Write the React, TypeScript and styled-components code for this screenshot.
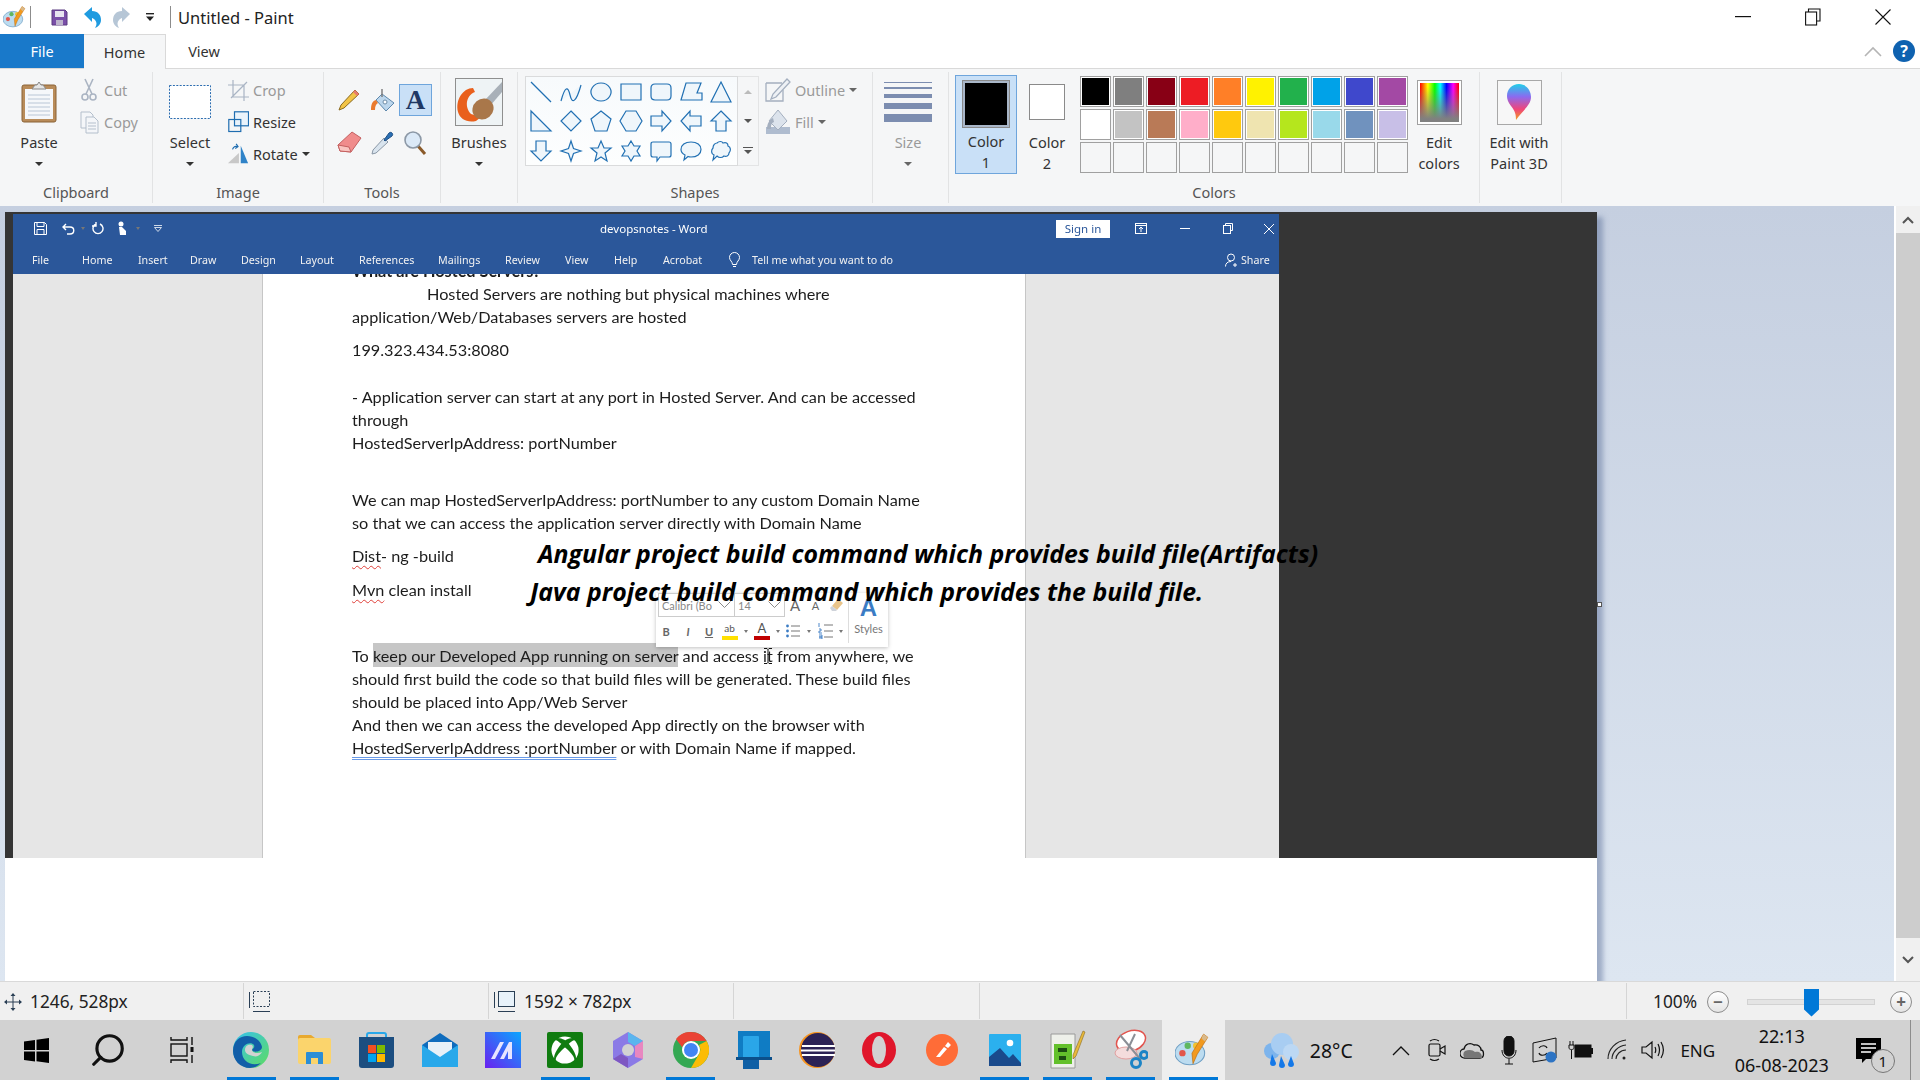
import React from "react"
import styled, { createGlobalStyle } from "styled-components"
import { FaXbox } from "react-icons/fa"
import { FiSearch } from "react-icons/fi"

const GlobalStyle = createGlobalStyle`
  html, body { margin: 0; padding: 0; width: 1920px; height: 1080px; overflow: hidden; background: #fff; }
  body { font-family: "Noto Sans", "Open Sans", sans-serif; color: #222; }
  * { box-sizing: border-box; }
  svg { display: block; }
`

const Root = styled.div`
  width: 1920px;
  height: 1080px;
  display: flex;
  flex-direction: column;
  overflow: hidden;
`

/* ---------- title bar ---------- */
const TitleBar = styled.div`
  height: 34px;
  padding-right: 2px;
  display: flex;
  align-items: center;
  background: #fff;
`
const QuickSlot = styled.div<{ $w: number }>`
  width: ${p => p.$w}px;
  flex: none;
  height: 28px;
  display: flex;
  align-items: center;
  justify-content: center;
`
const VSep = styled.div`
  width: 1px;
  height: 22px;
  background: #8c8c8c;
`
const WindowTitle = styled.div`
  margin-left: 7px;
  font-size: 16.5px;
  color: #222;
  flex: 1;
`
const WinButton = styled.div`
  width: 70px;
  height: 34px;
  display: flex;
  align-items: center;
  justify-content: center;
`

/* ---------- tabs ---------- */
const TabRow = styled.div`
  height: 35px;
  display: flex;
  align-items: stretch;
  background: #fff;
  border-bottom: 1px solid #d9d9d9;
`
const Tab = styled.div<{ $kind?: "file" | "active" }>`
  width: ${p => (p.$kind === "file" ? 84 : p.$kind === "active" ? 82 : 76)}px;
  display: flex;
  align-items: center;
  justify-content: center;
  font-size: 14.5px;
  color: ${p => (p.$kind === "file" ? "#fff" : "#333")};
  background: ${p => (p.$kind === "file" ? "#1979ca" : p.$kind === "active" ? "#f5f6f7" : "#fff")};
  border-right: ${p => (p.$kind === "active" ? "1px solid #d9d9d9" : "none")};
  border-top: ${p => (p.$kind === "active" ? "1px solid #d9d9d9" : "none")};
  margin-bottom: ${p => (p.$kind === "active" ? "-1px" : "0")};
`
const TabFill = styled.div`
  flex: 1;
`
const RibbonHelp = styled.div`
  width: 56px;
  display: flex;
  align-items: center;
  gap: 11px;
`

/* ---------- ribbon ---------- */
const Ribbon = styled.div`
  height: 137px;
  background: #f5f6f7;
  display: flex;
  padding: 3px 0 3px;
`
const Group = styled.section<{ $w: number }>`
  width: ${p => p.$w}px;
  display: flex;
  flex-direction: column;
  border-right: 1px solid #e2e3e4;
`
const GroupBody = styled.div`
  flex: 1;
  display: flex;
  min-height: 0;
`
const GroupLabel = styled.div`
  height: 21px;
  text-align: center;
  font-size: 14.5px;
  line-height: 21px;
  color: #555;
`
const BigBtn = styled.div<{ $w: number; $on?: boolean; $muted?: boolean }>`
  width: ${p => p.$w}px;
  flex: none;
  display: flex;
  flex-direction: column;
  align-items: center;
  font-size: 14.5px;
  color: ${p => (p.$muted ? "#9a9a9a" : "#333")};
  align-self: flex-start;
  ${p => (p.$on ? "background:#c9e0f7;border:1px solid #6ea5dc;margin-top:3px;height:99px;" : "")}
`
const BigIcon = styled.div<{ $on?: boolean }>`
  height: ${p => (p.$on ? 56 : 60)}px;
  display: flex;
  align-items: center;
  justify-content: center;
`
const BigLine = styled.div`
  height: 21px;
  line-height: 21px;
  white-space: nowrap;
  display: flex;
  align-items: center;
  justify-content: center;
`
const Caret = styled.span<{ $c?: string }>`
  display: inline-block;
  width: 0;
  height: 0;
  border-left: 4px solid transparent;
  border-right: 4px solid transparent;
  border-top: 4px solid ${p => p.$c || "#333"};
`
const SmallStack = styled.div<{ $ml?: number }>`
  padding-top: 2px;
  margin-left: ${p => p.$ml || 0}px;
  display: flex;
  flex-direction: column;
`
const SmallRow = styled.div<{ $muted?: boolean }>`
  height: 32px;
  display: flex;
  align-items: center;
  gap: 4px;
  font-size: 14.5px;
  white-space: nowrap;
  color: ${p => (p.$muted ? "#9a9a9a" : "#333")};
`
const SmallIcon = styled.div`
  width: 22px;
  display: flex;
  justify-content: center;
`
const ToolGrid = styled.div`
  margin: 6px 0 0 9px;
  display: grid;
  grid-template-columns: repeat(3, 33px);
  grid-auto-rows: 43px;
`
const ToolCell = styled.div<{ $on?: boolean }>`
  display: flex;
  align-items: center;
  justify-content: center;
  ${p => (p.$on ? "background:#c9e0f7;border:1px solid #6ea5dc;margin:6px 0 5px;" : "")}
`
const TextToolGlyph = styled.span`
  font-family: "Liberation Serif", serif;
  font-size: 27px;
  font-weight: 700;
  line-height: 30px;
  color: #1f3864;
`
const Gallery = styled.div`
  margin: 4px 0 0 7px;
  width: 213px;
  height: 90px;
  background: linear-gradient(#f7fafc, #fdfefe);
  border: 1px solid #dadbdc;
  display: grid;
  grid-template-columns: repeat(7, 30px);
  grid-auto-rows: 29.5px;
`
const GalleryCell = styled.div`
  display: flex;
  align-items: center;
  justify-content: center;
`
const GalleryScroll = styled.div`
  margin-top: 4px;
  width: 21px;
  height: 90px;
  border: 1px solid #e3e4e5;
  border-left: none;
  display: flex;
  flex-direction: column;
`
const ScrollStep = styled.div`
  flex: 1;
  display: flex;
  flex-direction: column;
  gap: 2px;
  align-items: center;
  justify-content: center;
`
const CaretUp = styled(Caret)`
  transform: rotate(180deg);
`
const Bar = styled.div`
  width: 10px;
  height: 1px;
  background: #555;
`
const Palette = styled.div`
  margin: 4px 0 0 3px;
  display: grid;
  grid-template-columns: repeat(10, 31px);
  grid-auto-rows: 31px;
  gap: 2px;
  flex: none;
  align-self: flex-start;
`
const Swatch = styled.div<{ $c?: string }>`
  border: 1px solid #a0a0a0;
  padding: 1px;
  background: ${p => (p.$c ? "#fff" : "#f5f6f7")};
  &::after {
    content: "";
    display: block;
    width: 100%;
    height: 100%;
    background: ${p => p.$c || "transparent"};
  }
`
const ColorWell = styled.div<{ $size: number; $c: string }>`
  width: ${p => p.$size}px;
  height: ${p => p.$size}px;
  background: ${p => p.$c};
  border: 1px solid #8a8a8a;
  box-shadow: inset 0 0 0 1px #fff;
  ${p => (p.$c === "#000" ? "outline:2px solid #a9b6c8;outline-offset:-3px;" : "")}
`
const GradientWell = styled.div`
  width: 43px;
  height: 43px;
  border: 2px solid #fff;
  outline: 1px solid #a0a0a0;
  background: linear-gradient(rgba(128, 128, 128, 0) 10%, #808080 92%),
    linear-gradient(90deg, #f00, #ff0 20%, #0f0 38%, #0ff 52%, #00f 68%, #f0f 85%, #f00);
`
const Paint3dTile = styled.div`
  width: 45px;
  height: 45px;
  background: #f7f7f7;
  border: 1px solid #a8a8a8;
  display: flex;
  align-items: center;
  justify-content: center;
`

/* ---------- canvas ---------- */
const Workspace = styled.div`
  height: 775px;
  display: flex;
  overflow: hidden;
`
const CanvasArea = styled.div`
  flex: 1;
  padding: 6px 0 0 5px;
  background: linear-gradient(#c5cfe0, #dde6f1);
  overflow: hidden;
`
const Bitmap = styled.div`
  width: 1592px;
  height: 769px;
  background: #fff;
  box-shadow: 6px 5px 5px rgba(96, 116, 156, 0.5);
  position: relative;
`
const Handle = styled.div`
  position: absolute;
  left: 1592px;
  top: 390px;
  width: 5px;
  height: 5px;
  background: #fff;
  border: 1px solid #555;
`
const Shot = styled.div`
  height: 646px;
  background: #353535;
  display: flex;
  position: relative;
  overflow: hidden;
`
const EdgeBar = styled.div`
  width: 8px;
  background: #353535;
`
const WordWindow = styled.div`
  width: 1266px;
  margin-top: 2px;
  display: flex;
  flex-direction: column;
  filter: blur(0.3px);
`
const WordTitle = styled.div`
  height: 29px;
  padding-left: 11px;
  background: #2b579a;
  color: #fff;
  display: flex;
  align-items: center;
  font-size: 11.5px;
`
const WordSlot = styled.div<{ $w: number }>`
  width: ${p => p.$w}px;
  flex: none;
  display: flex;
  align-items: center;
  justify-content: center;
`
const WordName = styled.div`
  width: 883px;
  flex: none;
  padding-left: 427px;
`
const SignIn = styled.div`
  width: 54px;
  height: 18px;
  flex: none;
  background: #fff;
  color: #2b579a;
  font-size: 11.5px;
  line-height: 18px;
  text-align: center;
  white-space: nowrap;
`
const WordTabs = styled.div`
  height: 31px;
  padding: 2px 0 0 19px;
  background: #2b579a;
  color: #f2f2f2;
  display: flex;
  align-items: center;
  font-size: 10.7px;
`
const WordTab = styled.div<{ $w: number }>`
  width: ${p => p.$w}px;
  flex: none;
  white-space: nowrap;
`
const TellMe = styled.div`
  width: 496px;
  flex: none;
  display: flex;
  align-items: center;
  gap: 12px;
`
const ShareBox = styled.div`
  display: flex;
  align-items: center;
  gap: 2px;
`
const DocBody = styled.div`
  flex: 1;
  display: flex;
  min-height: 0;
  background: #e6e6e6;
`
const Page = styled.div`
  margin-left: 249px;
  width: 764px;
  background: #fff;
  border-left: 1px solid #c6c6c6;
  border-right: 1px solid #c6c6c6;
  padding-left: 89px;
  overflow: hidden;
  font-family: Lato, "Open Sans", sans-serif;
  font-size: 16.25px;
  color: #1c1c1c;
`
const DocLine = styled.div<{ $gap?: number; $indent?: number; $bold?: boolean }>`
  height: 23px;
  line-height: 23px;
  white-space: nowrap;
  margin-top: ${p => p.$gap || 0}px;
  padding-left: ${p => p.$indent || 0}px;
  font-weight: ${p => (p.$bold ? 700 : 400)};
`
const Squiggle = styled.span`
  text-decoration: underline wavy #e0403a 1px;
  text-underline-offset: 3px;
`
const Selected = styled.span`
  background: #c6c6c6;
  padding: 3px 0 2px;
`
const GrammarMark = styled.span`
  text-decoration: underline double #6a9be8 1px;
  text-underline-offset: 3px;
`
const Annotation = styled.div<{ $left: number; $top: number }>`
  position: absolute;
  left: ${p => p.$left}px;
  top: ${p => p.$top}px;
  z-index: 3;
  font-family: "Open Sans", sans-serif;
  font-style: italic;
  font-weight: 700;
  font-size: 24.85px;
  line-height: 32px;
  color: #000;
  white-space: nowrap;
`
const MiniBar = styled.div`
  position: absolute;
  left: 651px;
  top: 381px;
  width: 232px;
  height: 54px;
  background: #fff;
  box-shadow: 0 1px 4px rgba(0, 0, 0, 0.25);
  z-index: 2;
  display: flex;
  flex-direction: column;
  gap: 2px;
  padding-left: 2px;
  font-family: Lato, sans-serif;
  color: #666;
  font-size: 11px;
`
const MiniRow = styled.div`
  height: 24px;
  display: flex;
  align-items: center;
`
const MiniField = styled.div<{ $w: number }>`
  width: ${p => p.$w}px;
  height: 24px;
  flex: none;
  border: 1px solid #ccc;
  border-left-width: ${p => (p.$w > 60 ? 1 : 0)}px;
  display: flex;
  align-items: center;
  justify-content: space-between;
  padding: 0 3px;
  font-size: 11px;
  color: #888;
  white-space: nowrap;
`
const MiniCell = styled.div<{ $w: number; $b?: boolean; $i?: boolean; $u?: boolean; $size?: number }>`
  width: ${p => p.$w}px;
  flex: none;
  display: flex;
  align-items: center;
  justify-content: center;
  font-size: ${p => p.$size || 11}px;
  font-weight: ${p => (p.$b ? 700 : 400)};
  font-style: ${p => (p.$i ? "italic" : "normal")};
  text-decoration: ${p => (p.$u ? "underline" : "none")};
`
const MarkedLetter = styled.span<{ $bar: string; $size: number }>`
  width: 16px;
  height: 18px;
  text-align: center;
  font-size: ${p => p.$size}px;
  line-height: 13px;
  color: #555;
  border-bottom: 4px solid ${p => p.$bar};
`
const TinyCaret = styled(Caret)`
  border-left-width: 2.5px;
  border-right-width: 2.5px;
  border-top-width: 3px;
  border-top-color: #777;
`
const StylesBox = styled.div`
  position: absolute;
  right: 0;
  top: 4px;
  bottom: 4px;
  width: 40px;
  border-left: 1px solid #ddd;
  display: flex;
  flex-direction: column;
  align-items: center;
  gap: 3px;
  font-size: 11px;
  color: #777;
`
const StylesGlyph = styled.div`
  height: 22px;
  font-family: "Liberation Sans", sans-serif;
  font-size: 24px;
  line-height: 22px;
  font-weight: 700;
  color: #3b7cc4;
`
const BeamCursor = styled.div`
  position: absolute;
  left: 759px;
  top: 436px;
  z-index: 4;
`
const Scrollbar = styled.div`
  width: 26px;
  background: #f0f0f0;
  border-left: 2px solid #fff;
  display: flex;
  flex-direction: column;
`
const ScrollEnd = styled.div<{ $h: number }>`
  height: ${p => p.$h}px;
  display: flex;
  align-items: center;
  justify-content: center;
`
const ScrollThumb = styled.div`
  flex: 1;
  background: #cdcdcd;
`

/* ---------- status bar ---------- */
const StatusBar = styled.div`
  height: 39px;
  background: #f0f0f0;
  border-top: 1px solid #d9d9d9;
  display: flex;
  padding-top: 1px;
  font-size: 17.3px;
  color: #222;
`
const StatusCell = styled.div<{ $w?: number }>`
  width: ${p => (p.$w ? `${p.$w}px` : "auto")};
  flex: ${p => (p.$w ? "none" : 1)};
  height: 36px;
  padding-top: 1px;
  border-right: 1px solid #d5d5d5;
  display: flex;
  align-items: center;
  gap: 8px;
  padding-left: 4px;
`
const ZoomBox = styled.div`
  flex: 1;
  display: flex;
  align-items: center;
  padding-left: 26px;
`
const ZoomPct = styled.div`
  width: 54px;
  flex: none;
`
const ZoomButton = styled.div`
  width: 22px;
  height: 22px;
  flex: none;
  border: 1px solid #8c8c8c;
  border-radius: 50%;
  background: linear-gradient(#fff, #e4e4e4);
  display: flex;
  align-items: center;
  justify-content: center;
  font-weight: 700;
  font-size: 17px;
  line-height: 1;
  color: #666;
`
const ZoomTrack = styled.div`
  width: 128px;
  flex: none;
  height: 6px;
  margin: 0 15px 0 18px;
  background: #e4e4e4;
  border: 1px solid #d2d2d2;
  position: relative;
`
const ZoomThumb = styled.div`
  position: absolute;
  left: 56px;
  top: -11px;
  width: 15px;
  height: 28px;
  background: #0078d7;
  clip-path: polygon(0 0, 100% 0, 100% 75%, 50% 100%, 0 75%);
`

/* ---------- taskbar ---------- */
const Taskbar = styled.div`
  height: 60px;
  background: #d2d2d2;
  display: flex;
  align-items: stretch;
  color: #111;
`
const TaskSlot = styled.div<{ $w: number; $active?: boolean }>`
  width: ${p => p.$w}px;
  flex: none;
  display: flex;
  flex-direction: column;
  align-items: center;
  background: ${p => (p.$active ? "#eeeeee" : "transparent")};
`
const TaskGlyph = styled.div`
  flex: 1;
  padding-top: 3px;
  display: flex;
  align-items: center;
  justify-content: center;
`
const TaskLine = styled.div<{ $on?: boolean }>`
  width: 49px;
  height: 3px;
  background: ${p => (p.$on ? "#0078d7" : "transparent")};
`
const TraySlot = styled.div<{ $w: number; $start?: boolean }>`
  width: ${p => p.$w}px;
  flex: none;
  display: flex;
  align-items: center;
  justify-content: ${p => (p.$start ? "flex-start" : "center")};
  padding-left: ${p => (p.$start ? 9 : 0)}px;
  font-size: ${p => (p.$start ? 19.5 : 17)}px;
`
const Clock = styled.div`
  width: 114px;
  flex: none;
  display: flex;
  flex-direction: column;
  align-items: center;
  justify-content: center;
  gap: 5px;
  line-height: 24px;
  font-size: 18px;
`
const ClockLine = styled.div`
  height: 24px;
`
const NotifyBox = styled.div`
  width: 60px;
  flex: none;
  position: relative;
  display: flex;
  align-items: center;
  justify-content: center;
`
const NotifyBadge = styled.div`
  position: absolute;
  left: 32px;
  top: 29px;
  width: 24px;
  height: 24px;
  border-radius: 50%;
  border: 1px solid #777;
  background: #d2d2d2;
  text-align: center;
  font-size: 15px;
  line-height: 22px;
`
const TaskEnd = styled.div`
  width: 12px;
  border-right: 1px solid #8c8c8c;
`
const SearchGlyph = styled.div`
  font-size: 38px;
  color: #111;
  display: flex;
  transform: scaleX(-1);
`
const XboxTile = styled.div`
  width: 36px;
  height: 36px;
  border-radius: 2px;
  background: #107c10;
  color: #fff;
  display: flex;
  align-items: center;
  justify-content: center;
  font-size: 28px;
`

/* ---------- drawn icons ---------- */
const PaintLogo = ({ s = 24 }: { s?: number }) => (
  <svg width={s} height={s} viewBox="0 0 34 34">
    <ellipse cx="14" cy="20" rx="14" ry="11" fill="#bcdcf0" stroke="#6f9fc4" />
    <circle cx="7" cy="20" r="3" fill="#e2574c" />
    <circle cx="12" cy="13" r="3" fill="#5fb760" />
    <circle cx="20" cy="13" r="3" fill="#f2c230" />
    <path d="M27 2l4 3-10 16-4 9-1-10z" fill="#f29a1f" stroke="#b86a10" strokeWidth=".6" />
    <path d="M27 2l4 3-3 4-3-3z" fill="#d9b98a" />
  </svg>
)
const SaveIcon = () => (
  <svg width="17" height="17" viewBox="0 0 17 17">
    <path d="M1 1h13l2 2v13H1z" fill="#7a4fa8" stroke="#5a3a80" />
    <rect x="4" y="2" width="9" height="6" fill="#e8e4f0" />
    <rect x="5" y="11" width="7" height="5" fill="#bdb4cc" />
  </svg>
)
const UndoIcon = ({ c }: { c: string }) => (
  <svg width="22" height="24" viewBox="0 0 22 24">
    <path d="M3 9l8-7v4c6 0 9 4 9 9 0 4-3 7-6 8 2-3 2-6 0-8-1-1-2-2-3-2v4z" fill={c} />
  </svg>
)
const RedoIcon = () => (
  <svg width="22" height="24" viewBox="0 0 22 24" transform="scale(-1 1)">
    <path d="M3 9l8-7v4c6 0 9 4 9 9 0 4-3 7-6 8 2-3 2-6 0-8-1-1-2-2-3-2v4z" fill="#b6c6d6" />
  </svg>
)
const CustomizeIcon = () => (
  <svg width="10" height="10" viewBox="0 0 10 10">
    <rect x="1" y="1" width="8" height="1.4" fill="#222" />
    <path d="M1 4.5h8L5 9z" fill="#222" />
  </svg>
)
const MinimizeIcon = () => (
  <svg width="16" height="2"><rect width="16" height="1.2" fill="#111" /></svg>
)
const RestoreIcon = () => (
  <svg width="16" height="18" viewBox="0 0 16 18" fill="none" stroke="#111" strokeWidth="1.1">
    <rect x=".6" y="4" width="11" height="13" fill="#fff" />
    <path d="M3.5 4V1h11.5v12h-3.4" />
  </svg>
)
const CloseIcon = () => (
  <svg width="16" height="16" viewBox="0 0 16 16" stroke="#111" strokeWidth="1.1">
    <path d="M.5.5l15 15M15.5.5l-15 15" />
  </svg>
)
const ChevronUp = () => (
  <svg width="18" height="11" viewBox="0 0 18 11" fill="none" stroke="#b5b5b5" strokeWidth="1.6">
    <path d="M1 10l8-8 8 8" />
  </svg>
)
const HelpIcon = () => (
  <svg width="22" height="22" viewBox="0 0 22 22">
    <circle cx="11" cy="11" r="11" fill="#0f62b0" />
    <text x="11" y="17" textAnchor="middle" fontSize="16" fontWeight="700" fill="#fff" fontFamily="Noto Sans">?</text>
  </svg>
)
const PasteIcon = () => (
  <svg width="36" height="42" viewBox="0 0 36 42">
    <rect x="1" y="4" width="34" height="37" rx="2" fill="#b98c5a" stroke="#8a6236" />
    <rect x="4" y="8" width="28" height="30" fill="#f5f7fa" />
    <g stroke="#b9c6d6"><path d="M7 14h22M7 18h22M7 22h22M7 26h22M7 30h22M7 34h22" /></g>
    <path d="M11 8l3-4h2l2-3 2 3h2l3 4z" fill="#e6e6e6" stroke="#888" />
  </svg>
)
const CutIcon = () => (
  <svg width="16" height="24" viewBox="0 0 16 24" fill="none" stroke="#aab4c2" strokeWidth="1.6">
    <path d="M4 1l7 15M12 1L5 16" />
    <circle cx="4" cy="19" r="3" />
    <circle cx="12" cy="19" r="3" />
  </svg>
)
const CopyIcon = () => (
  <svg width="19" height="23" viewBox="0 0 19 23" fill="#f4f6f9" stroke="#b4bfcc">
    <path d="M1 1h9l3 3v13H1z" />
    <path d="M6 6h8l4 4v12H6z" />
    <path d="M8 12h8M8 15h8M8 18h8" />
  </svg>
)
const SelectIcon = () => (
  <svg width="42" height="34" viewBox="0 0 42 34">
    <rect x=".5" y=".5" width="41" height="33" fill="#fff" stroke="#2b6cb0" strokeDasharray="2 1.4" />
  </svg>
)
const CropIcon = () => (
  <svg width="21" height="21" viewBox="0 0 21 21" fill="none" stroke="#a9b4c4" strokeWidth="1.2">
    <path d="M5 0v17h16M0 5h16v16M3 18L19 2" />
  </svg>
)
const ResizeIcon = () => (
  <svg width="21" height="22" viewBox="0 0 21 22">
    <rect x="6.5" y=".8" width="14" height="14" fill="#eaf3fb" stroke="#1f6db0" strokeWidth="1.2" />
    <rect x=".8" y="8.5" width="12" height="12" fill="none" stroke="#1f6db0" strokeWidth="1.2" />
  </svg>
)
const RotateIcon = () => (
  <svg width="24" height="22" viewBox="0 0 24 22">
    <path d="M1 21l12-11v11z" fill="#c8c8c8" />
    <path d="M15 2l8 19h-8z" fill="#2f83c8" />
    <path d="M6 6c1-3 3-4 5-3M10 0l2 3-3 2" fill="none" stroke="#1f6db0" strokeWidth="1.3" />
  </svg>
)
const PencilIcon = () => (
  <svg width="23" height="23" viewBox="0 0 23 23">
    <path d="M17 2l4 4L6 20l-5 2 2-5z" fill="#f2c447" stroke="#8a6a20" />
    <path d="M17 2l4 4-2 2-4-4z" fill="#e77a6e" />
  </svg>
)
const BucketIcon = () => (
  <svg width="25" height="24" viewBox="0 0 25 24">
    <path d="M12 6l12 9-8 8-10-11z" fill="#bcd6ec" stroke="#5d88ad" />
    <path d="M6 12C2 13 1 17 1 22h4c0-4 1-6 3-7z" fill="#ea7a2e" />
    <path d="M12 1v8" stroke="#777" strokeWidth="1.4" />
    <circle cx="15" cy="14" r="2" fill="#fff" stroke="#6d8ca8" />
  </svg>
)
const EraserIcon = () => (
  <svg width="25" height="23" viewBox="0 0 25 23">
    <path d="M15 1l9 6-10 14-11-1-2-6z" fill="#f08c8c" stroke="#c46060" />
    <path d="M1 14l11 2 2 5-11-1z" fill="#f9c4c0" stroke="#c46060" />
  </svg>
)
const PickerIcon = () => (
  <svg width="24" height="24" viewBox="0 0 24 24">
    <path d="M13 7l4 4L5 22l-4 1 1-4z" fill="#d9e4ee" stroke="#8a97a6" />
    <path d="M13 9l5-7c2-2 5 1 3 3l-7 5z" fill="#2b6fb3" stroke="#1e4f85" />
  </svg>
)
const LensIcon = () => (
  <svg width="23" height="24" viewBox="0 0 23 24">
    <path d="M14 15l7 8" stroke="#8a5a2a" strokeWidth="3" />
    <circle cx="9" cy="9" r="8" fill="#dbe9f7" stroke="#8c98a6" strokeWidth="1.6" />
  </svg>
)
const BrushIcon = () => (
  <svg width="48" height="48" viewBox="0 0 48 48">
    <rect x=".5" y=".5" width="47" height="47" fill="#eef3f5" stroke="#8f8f8f" />
    <path d="M47 4L30 22l5 6L47 14z" fill="#a8b0b8" />
    <path d="M18 10C8 10 0 22 3 34c2 7 9 11 18 9l5-4-10-3C10 30 10 18 20 14z" fill="#e9601c" />
    <ellipse cx="28" cy="31" rx="11" ry="10" fill="#a9774a" transform="rotate(-40 28 31)" />
  </svg>
)
const SHAPES = [
  "M2 2l20 20", "M2 21C6 6 9 6 11 15s6 8 11-10", "M12 3a10 9 0 1 0 .01 0z", "M2 4h20v16H2z",
  "M6 4h12q4 0 4 4v8q0 4-4 4H6q-4 0-4-4V8q0-4 4-4z", "M7 3h15l-4 10 5 0v7H2z", "M12 2l10 20H2z",
  "M2 2l20 20H2z", "M12 2l10 10-10 10L2 12z", "M12 2l10 8-4 12H6L2 10z", "M7 2h10l6 10-6 10H7L1 12z",
  "M2 7h11V2l9 10-9 10v-5H2z", "M22 7H11V2L2 12l9 10v-5h11z", "M12 2l10 10h-5v10H7V12H2z",
  "M7 2h10v10h5L12 22 2 12h5z", "M12 2l2.5 7.5L22 12l-7.5 2.5L12 22l-2.5-7.5L2 12l7.5-2.5z",
  "M12 2l3 7h7l-6 5 2 8-6-4-6 4 2-8-6-5h7z", "M12 2l3 5h6l-3 5 3 5h-6l-3 5-3-5H3l3-5-3-5h6z",
  "M4 3h16q2 0 2 2v11q0 2-2 2h-9l-3 4v-4H4q-2 0-2-2V5q0-2 2-2z",
  "M12 3c6 0 10 3 10 7.5S18 18 12 18c-1 0-2 0-3-.5L5 21l1-5c-2-1-4-3-4-5.500C2 6 6 3 12 3z",
  "M8 4c2-2 5-2 6 0 3-1 5 0 5 3 3 1 3 5 1 7 0 3-3 4-5 3-2 2-5 2-7 0l-4 4 1-5c-3-1-3-5-1-7 0-3 2-5 4-5z",
]
const ShapeIcon = ({ d }: { d: string }) => (
  <svg width="24" height="24" viewBox="0 0 24 24">
    <path d={d} fill="#eff6fb" stroke="#2170b3" strokeWidth="1.2" />
  </svg>
)
const OutlineIcon = () => (
  <svg width="26" height="24" viewBox="0 0 26 24" fill="none" stroke="#a4afbf" strokeWidth="1.3">
    <path d="M1 5h16M1 5v18h17V12" />
    <path d="M22 1l3 3L11 19l-5 2 2-5z" fill="#eef1f5" />
  </svg>
)
const FillIcon = () => (
  <svg width="26" height="26" viewBox="0 0 26 26">
    <rect x="1" y="18" width="24" height="7" fill="#afbccf" />
    <path d="M13 1l9 11-9 9-9-9z" fill="#dce3ec" stroke="#a4afbf" />
    <path d="M2 20c0-5 2-9 6-11l1 4c-3 1-3 4-3 7z" fill="#a4afbf" />
  </svg>
)
const SizeIcon = () => (
  <svg width="48" height="40" viewBox="0 0 48 40" fill="#7c8db0">
    <rect y="0" width="48" height="1" />
    <rect y="5" width="48" height="2" />
    <rect y="12" width="48" height="4" />
    <rect y="21" width="48" height="6" />
    <rect y="32" width="48" height="8" />
  </svg>
)
const Paint3dIcon = () => (
  <svg width="28" height="38" viewBox="0 0 28 38">
    <defs>
      <linearGradient id="drop" x1="0" y1="0" x2="0" y2="1">
        <stop offset="0" stopColor="#1fd0e8" />
        <stop offset=".35" stopColor="#8a6bf0" />
        <stop offset=".7" stopColor="#f0457a" />
        <stop offset="1" stopColor="#f0a020" />
      </linearGradient>
    </defs>
    <path d="M14 1c7 0 12 6 12 13 0 8-8 13-15 23 0-6-1-9-5-14C3 19 2 16 2 13 2 6 7 1 14 1z" fill="url(#drop)" />
  </svg>
)
const ArrowTiny = ({ up }: { up?: boolean }) => (
  <svg width="12" height="8" viewBox="0 0 12 8" fill="none" stroke="#555" strokeWidth="2">
    <path d={up ? "M1 7l5-5 5 5" : "M1 1l5 5 5-5"} />
  </svg>
)
const MoveIcon = () => (
  <svg width="18" height="18" viewBox="0 0 18 18" fill="#2a3f55" stroke="#2a3f55">
    <path d="M9 1v16M1 9h16" fill="none" />
    <path d="M9 0l2.500 3h-5zM9 18l2.500-3h-5zM0 9l3-2.500v5zM18 9l-3-2.500v5z" stroke="none" />
  </svg>
)
const SelSizeIcon = ({ solid }: { solid?: boolean }) => (
  <svg width="23" height="24" viewBox="0 0 23 24" fill="none" stroke="#2a3f55">
    <path d="M1.500 2v16M22 21.500H5" />
    <rect x="5.500" y="1.500" width="16" height="15" fill={solid ? "#e8f2fa" : "none"} strokeDasharray={solid ? undefined : "2 1.500"} />
  </svg>
)

/* word window */
const WSave = () => (
  <svg width="13" height="13" viewBox="0 0 13 13" fill="none" stroke="#fff">
    <path d="M.5.5h10l2 2v10H.5zM3 .5v4h7v-4M3 12.500v-5h7v5" />
  </svg>
)
const WUndo = () => (
  <svg width="13" height="12" viewBox="0 0 13 12" fill="none" stroke="#fff" strokeWidth="1.4">
    <path d="M4 1L1 4l3 3M1 4h7c5 0 5 7 0 7H5" />
  </svg>
)
const WRepeat = () => (
  <svg width="12" height="13" viewBox="0 0 12 13" fill="none" stroke="#fff" strokeWidth="1.4">
    <path d="M4 2a5 5 0 1 0 4 0M4 0v4H0" />
  </svg>
)
const WTouch = () => (
  <svg width="10" height="15" viewBox="0 0 10 15" fill="#fff">
    <circle cx="4" cy="3" r="2.500" />
    <path d="M2 6h3l4 4v4H3z" />
  </svg>
)
const WCustomize = () => (
  <svg width="8" height="7" viewBox="0 0 8 7" stroke="#cfd9e8" fill="none">
    <path d="M0 .5h8M.5 2.500h7L4 6.500z" />
  </svg>
)
const WDisplay = () => (
  <svg width="12" height="11" viewBox="0 0 12 11" fill="none" stroke="#fff">
    <rect x=".5" y=".5" width="11" height="10" />
    <path d="M.5 2.500h11M6 9V4M4 6l2-2 2 2" />
  </svg>
)
const WMin = () => <svg width="10" height="2"><rect width="10" height="1" fill="#fff" /></svg>
const WRestore = () => (
  <svg width="10" height="11" viewBox="0 0 10 11" fill="none" stroke="#fff">
    <rect x=".5" y="2.500" width="7" height="8" />
    <path d="M2.500 2.500v-2h7v7h-2" />
  </svg>
)
const WClose = () => (
  <svg width="10" height="10" viewBox="0 0 10 10" stroke="#fff">
    <path d="M0 0l10 10M10 0L0 10" />
  </svg>
)
const WBulb = () => (
  <svg width="11" height="15" viewBox="0 0 11 15" fill="none" stroke="#fff">
    <path d="M5.500.5a5 5 0 0 1 5 5c0 3-3 4-3 7h-4c0-3-3-4-3-7a5 5 0 0 1 5-5zM4 14.500h3" />
  </svg>
)
const WPerson = () => (
  <svg width="14" height="14" viewBox="0 0 14 14" fill="none" stroke="#fff">
    <circle cx="6" cy="4.500" r="3.500" />
    <path d="M.5 13.500c0-3 2-5 5.500-5M10 10v4M8 12h4" />
  </svg>
)

/* word mini toolbar */
const MiniChevron = () => (
  <svg width="13" height="8" viewBox="0 0 13 8" fill="none" stroke="#888">
    <path d="M.5.5l6 6 6-6" />
  </svg>
)
const MiniEraser = () => (
  <svg width="15" height="14" viewBox="0 0 15 14">
    <path d="M9 1l5 4-6 7-5-4z" fill="#e9c48a" />
    <path d="M3 8l5 4-1 1H3l-2-3z" fill="#cfd3da" />
  </svg>
)
const BulletsIcon = () => (
  <svg width="14" height="14" viewBox="0 0 14 14">
    <path d="M5 2h9M5 7h9M5 12h9" stroke="#777" />
    <circle cx="1.500" cy="2" r="1.400" fill="#3b7cc4" />
    <circle cx="1.500" cy="7" r="1.400" fill="#3b7cc4" />
    <circle cx="1.500" cy="12" r="1.400" fill="#3b7cc4" />
  </svg>
)
const NumberingIcon = () => (
  <svg width="15" height="16" viewBox="0 0 15 16">
    <path d="M6 2h9M6 8h9M6 14h9" stroke="#777" />
    <path d="M1 0v4M1 6h2v2H1v2h3M1 12h3v2H1m0 0h3v2H1" stroke="#3b7cc4" fill="none" strokeWidth=".9" />
  </svg>
)

/* taskbar */
const StartIcon = () => (
  <svg width="25" height="25" viewBox="0 0 25 25" fill="#000">
    <path d="M0 3.500l11-1.500v10H0zM12.500 1.800L25 0v12H12.500zM0 13.500h11v10L0 22zM12.500 13.500H25V25l-12.500-1.800z" />
  </svg>
)
const TaskViewIcon = () => (
  <svg width="24" height="28" viewBox="0 0 24 28" fill="none" stroke="#111" strokeWidth="1.4">
    <path d="M1 1v3h16V1M1 27v-3h16v3" />
    <rect x="1" y="8" width="16" height="12" />
    <path d="M22 1v8M22 19v8" />
    <rect x="20.500" y="11" width="3" height="5" fill="#111" stroke="none" />
  </svg>
)
const EdgeIcon = () => (
  <svg width="36" height="36" viewBox="0 0 36 36">
    <defs>
      <linearGradient id="edg" x1="0" y1="0" x2="1" y2="1">
        <stop offset="0" stopColor="#35c1f1" />
        <stop offset="1" stopColor="#5fdc5f" />
      </linearGradient>
    </defs>
    <circle cx="18" cy="18" r="18" fill="url(#edg)" />
    <path d="M0 19C0 9 7 4 14 4c8 0 14 5 15 11 0 5-9 6-10 3 1-2 3-2 2-5-3-4-12-1-12 7 0 9 9 15 19 11-4 4-8 5-11 5C7 36 0 28 0 19z" fill="#125ea8" />
    <path d="M12 18c0-5 4-6 7-5 2 2 0 3 0 5 0 3 6 4 10 2 0 0-3 6-9 4-5-1-8-3-8-6z" fill="#d2d2d2" />
  </svg>
)
const ExplorerIcon = () => (
  <svg width="33" height="32" viewBox="0 0 33 32">
    <path d="M0 3q0-2 2-2h11l4 3v6H0z" fill="#e8a92f" />
    <rect y="4" width="33" height="26" rx="2" fill="#fbd46c" />
    <path d="M8 30V19q0-1 1-1h15q1 0 1 1v11h-5v-6h-7v6z" fill="#2c8ed6" />
  </svg>
)
const StoreIcon = () => (
  <svg width="35" height="36" viewBox="0 0 35 36">
    <path d="M8 6V3q0-2 2-2h15q2 0 2 2v3" fill="none" stroke="#28a8ea" strokeWidth="2" />
    <path d="M0 5h35v28q0 3-3 3H3q-3 0-3-3z" fill="#1c4e80" />
    <rect x="9" y="13" width="8" height="8" fill="#f25022" />
    <rect x="18" y="13" width="8" height="8" fill="#7fba00" />
    <rect x="9" y="22" width="8" height="8" fill="#00a4ef" />
    <rect x="18" y="22" width="8" height="8" fill="#ffb900" />
  </svg>
)
const MailIcon = () => (
  <svg width="36" height="34" viewBox="0 0 36 34">
    <path d="M0 12L18 0l18 12v22H0z" fill="#0f6cbd" />
    <path d="M6 9h24v10L18 26 6 19z" fill="#e6f0f8" />
    <path d="M0 12l18 12 18-12v22H0z" fill="#28a8ea" />
  </svg>
)
const MaIcon = () => (
  <svg width="36" height="36" viewBox="0 0 36 36">
    <defs>
      <linearGradient id="ma" x1="0" y1="1" x2="1" y2="0">
        <stop offset="0" stopColor="#6a20f0" />
        <stop offset="1" stopColor="#0aa6ff" />
      </linearGradient>
    </defs>
    <rect width="36" height="36" fill="url(#ma)" />
    <path d="M6 27L15 10h4l-9 17zM15 27L24 10h3v17h-4v-8l-4 8z" fill="#e8e4ff" />
  </svg>
)
const CopilotIcon = () => (
  <svg width="36" height="36" viewBox="0 0 36 36">
    <path d="M18 0l15 9v18l-15 9-15-9V9z" fill="#8b7ae6" />
    <path d="M18 0l15 9-8 5-7-4z" fill="#5ab5ee" />
    <path d="M3 27l8-5 7 4v10z" fill="#7e57c2" />
    <path d="M33 9v18l-8-2V14z" fill="#e887c0" />
    <circle cx="18" cy="18" r="6" fill="#d2d2d2" />
  </svg>
)
const ChromeIcon = () => (
  <svg width="36" height="36" viewBox="0 0 36 36">
    <circle cx="18" cy="18" r="18" fill="#34a853" />
    <path d="M18 0a18 18 0 0 1 15.600 9H18a9 9 0 0 0-8.700 6.500L3 7A18 18 0 0 1 18 0z" fill="#ea4335" />
    <path d="M33.600 9A18 18 0 0 1 18 36l7.800-13.500A9 9 0 0 0 26 13z" fill="#fbbc05" />
    <circle cx="18" cy="18" r="9" fill="#fff" />
    <circle cx="18" cy="18" r="7" fill="#4285f4" />
  </svg>
)
const LaptopIcon = () => (
  <svg width="36" height="38" viewBox="0 0 36 38">
    <path d="M2 0h32v26H2z" fill="#0f7cc4" />
    <rect x="7" y="5" width="16" height="33" rx="1" fill="#2aa6e8" />
    <rect x="7" y="26" width="16" height="12" fill="#0e5fa5" />
    <rect y="26" width="36" height="3" fill="#0b4f8a" />
  </svg>
)
const EclipseIcon = () => (
  <svg width="36" height="36" viewBox="0 0 36 36">
    <circle cx="18" cy="18" r="18" fill="#f7941e" />
    <circle cx="19" cy="18" r="17" fill="#2c2255" />
    <path d="M3 13h33v2H3zM2 17.500h34v2H2zM3 22h33v2H3z" fill="#fff" />
  </svg>
)
const OperaIcon = () => (
  <svg width="34" height="36" viewBox="0 0 34 36">
    <ellipse cx="17" cy="18" rx="17" ry="18" fill="#e0162b" />
    <ellipse cx="17" cy="18" rx="7" ry="14" fill="#d2d2d2" />
  </svg>
)
const PostmanIcon = () => (
  <svg width="32" height="32" viewBox="0 0 32 32">
    <circle cx="16" cy="16" r="16" fill="#ff6c37" />
    <path d="M10 23l8-10 3 2-7 8zM19 12l3-4 3 3-3 3z" fill="#fff" />
  </svg>
)
const PhotosIcon = () => (
  <svg width="32" height="32" viewBox="0 0 32 32">
    <rect width="32" height="32" rx="1" fill="#2bb0ee" />
    <circle cx="21" cy="9" r="3.300" fill="#fff" />
    <path d="M0 32V23l11-9 9 10 4-4 8 9v3z" fill="#1a4a8c" />
  </svg>
)
const NotepadIcon = () => (
  <svg width="36" height="40" viewBox="0 0 36 40">
    <path d="M1 4h24v34H1z" fill="#eef0ea" stroke="#9a9a9a" />
    <rect x="4" y="14" width="18" height="20" fill="#63c02b" />
    <path d="M8 18h9v4H8zM9 26h7v4H9z" fill="#1c4d12" />
    <path d="M33 1l2 1-9 24-3 3 0-4z" fill="#e8b93a" stroke="#8a6a20" strokeWidth=".6" />
  </svg>
)
const SnipIcon = () => (
  <svg width="34" height="42" viewBox="0 0 34 42" fill="none">
    <ellipse cx="17" cy="12" rx="15" ry="10" fill="#fff" stroke="#e2554f" strokeWidth="1.500" transform="rotate(-20 17 12)" />
    <ellipse cx="12" cy="24" rx="11" ry="6" fill="#f4dcdc" stroke="#e2a0a0" />
    <path d="M6 6l21 25M13 22l8-17" stroke="#8b8f96" strokeWidth="2" />
    <circle cx="22" cy="34" r="4.500" stroke="#1c84c6" strokeWidth="3" />
    <circle cx="30" cy="26" r="3.500" stroke="#1c84c6" strokeWidth="3" />
  </svg>
)
const WeatherIcon = () => (
  <svg width="38" height="36" viewBox="0 0 38 36">
    <circle cx="10" cy="19" r="8" fill="#7db4ec" />
    <circle cx="20" cy="12" r="11" fill="#a8cdf2" />
    <circle cx="29" cy="20" r="8" fill="#bcd8f4" />
    <path d="M10 22l4 9a3 3 0 0 1-6 0zM19 24l4 9a3 3 0 0 1-6 0zM29 24l3 8a3 3 0 0 1-6 0z" fill="#1478e8" />
  </svg>
)
const TrayChevron = () => (
  <svg width="18" height="11" viewBox="0 0 18 11" fill="none" stroke="#111" strokeWidth="1.300">
    <path d="M1 10l8-8 8 8" />
  </svg>
)
const MeetIcon = () => (
  <svg width="18" height="24" viewBox="0 0 18 24" fill="none" stroke="#111" strokeWidth="1.200">
    <rect x="1" y="6" width="11" height="12" rx="1.500" />
    <path d="M12 11l5-3v8l-5-3M2 3c3-2 6-2 9 0M2 21c3 2 6 2 9 0" />
  </svg>
)
const CloudIcon = () => (
  <svg width="25" height="17" viewBox="0 0 25 17">
    <path d="M5 16a4.500 4.500 0 0 1-1-9C5 2 10 0 14 3c4-1 7 2 7 5 3 0 4 8-1 8z" fill="#d2d2d2" stroke="#111" strokeWidth="1.300" />
    <path d="M5 16a4.500 4.500 0 0 1 0-7c4-2 8-1 10 1 3-1 7 0 7 6z" fill="#777" />
  </svg>
)
const MicIcon = () => (
  <svg width="16" height="29" viewBox="0 0 16 29" fill="none" stroke="#111">
    <rect x="3" y="0" width="10" height="20" rx="5" fill="#111" />
    <path d="M1 14c0 11 14 11 14 0M8 23v5M4 28h8" />
  </svg>
)
const SyncIcon = () => (
  <svg width="26" height="26" viewBox="0 0 26 26">
    <path d="M1 6l23-5v20L1 25z" fill="none" stroke="#111" />
    <path d="M7 11c2-3 7-3 8 0M15 16c-2 3-7 3-8 0" fill="none" stroke="#111" strokeWidth="1.200" />
    <circle cx="19" cy="20" r="5.500" fill="#2d74c4" />
  </svg>
)
const BatteryIcon = () => (
  <svg width="25" height="18" viewBox="0 0 25 18">
    <rect x="7" y="4" width="16" height="12" fill="#111" stroke="#111" />
    <rect x="23" y="7" width="2" height="6" fill="#111" />
    <path d="M1 4h5v3c0 2-5 2-5 0zM2 0v4M5 0v4M3.500 9v9" stroke="#111" fill="#d2d2d2" />
  </svg>
)
const WifiIcon = () => (
  <svg width="20" height="22" viewBox="0 0 20 22" fill="none" stroke="#222" strokeWidth="1.100">
    <path d="M1 20C1 10 9 2 19 1M5 20c0-7 6-13 14-14M9 20c0-4 4-9 10-9" />
    <circle cx="17" cy="19" r="1.500" fill="#222" stroke="none" />
  </svg>
)
const SoundIcon = () => (
  <svg width="24" height="22" viewBox="0 0 24 22" fill="none" stroke="#111" strokeWidth="1.200">
    <path d="M1 8v6h4l6 5V3L5 8zM14 8c1 2 1 4 0 6M17 5c2 4 2 8 0 12M20 3c3 5 3 11 0 16" />
  </svg>
)
const NotifyIcon = () => (
  <svg width="25" height="25" viewBox="0 0 25 25">
    <path d="M0 0h25v21H10l-4 4v-4H0z" fill="#000" />
    <path d="M5 6h15M5 10h15M5 14h10" stroke="#fff" strokeWidth="1.300" />
  </svg>
)
const IBeam = () => (
  <svg width="8" height="16" viewBox="0 0 8 16" fill="none" stroke="#111">
    <path d="M0 .5h3l1 1 1-1h3M4 1.500v13M0 15.500h3l1-1 1 1h3" />
  </svg>
)

const PALETTE = [
  "#000000", "#7f7f7f", "#880015", "#ed1c24", "#ff7f27", "#fff200", "#22b14c", "#00a2e8", "#3f48cc", "#a349a4",
  "#ffffff", "#c3c3c3", "#b97a57", "#ffaec9", "#ffc90e", "#efe4b0", "#b5e61d", "#99d9ea", "#7092be", "#c8bfe7",
  "", "", "", "", "", "", "", "", "", "",
]

const WORD_TABS: [string, number][] = [
  ["File", 50], ["Home", 56], ["Insert", 52], ["Draw", 51], ["Design", 59], ["Layout", 59],
  ["References", 79], ["Mailings", 67], ["Review", 60], ["View", 49], ["Help", 49], ["Acrobat", 66],
]

const TASK_APPS: { icon: React.ReactNode; on?: boolean; active?: boolean }[] = [
  { icon: <EdgeIcon />, on: true },
  { icon: <ExplorerIcon />, on: true },
  { icon: <StoreIcon /> },
  { icon: <MailIcon /> },
  { icon: <MaIcon /> },
  { icon: <XboxTile><FaXbox /></XboxTile>, on: true },
  { icon: <CopilotIcon /> },
  { icon: <ChromeIcon />, on: true },
  { icon: <LaptopIcon /> },
  { icon: <EclipseIcon /> },
  { icon: <OperaIcon /> },
  { icon: <PostmanIcon /> },
  { icon: <PhotosIcon />, on: true },
  { icon: <NotepadIcon />, on: true },
  { icon: <SnipIcon />, on: true },
  { icon: <PaintLogo s={36} />, on: true, active: true },
]

const App = () => {
  return (
    <Root>
      <GlobalStyle />
      <TitleBar>
        <QuickSlot $w={30}><PaintLogo /></QuickSlot>
        <VSep />
        <QuickSlot $w={16} />
        <QuickSlot $w={24}><SaveIcon /></QuickSlot>
        <QuickSlot $w={6} />
        <QuickSlot $w={30}><UndoIcon c="#1f9be0" /></QuickSlot>
        <QuickSlot $w={30}><RedoIcon /></QuickSlot>
        <QuickSlot $w={26}><CustomizeIcon /></QuickSlot>
        <QuickSlot $w={7} />
        <VSep />
        <WindowTitle>Untitled - Paint</WindowTitle>
        <WinButton><MinimizeIcon /></WinButton>
        <WinButton><RestoreIcon /></WinButton>
        <WinButton><CloseIcon /></WinButton>
      </TitleBar>

      <TabRow>
        <Tab $kind="file">File</Tab>
        <Tab $kind="active">Home</Tab>
        <Tab>View</Tab>
        <TabFill />
        <RibbonHelp><ChevronUp /><HelpIcon /></RibbonHelp>
      </TabRow>

      <Ribbon>
        <Group $w={153}>
          <GroupBody>
            <BigBtn $w={78}>
              <BigIcon><PasteIcon /></BigIcon>
              <BigLine>Paste</BigLine>
              <BigLine><Caret /></BigLine>
            </BigBtn>
            <SmallStack>
              <SmallRow $muted><SmallIcon><CutIcon /></SmallIcon>Cut</SmallRow>
              <SmallRow $muted><SmallIcon><CopyIcon /></SmallIcon>Copy</SmallRow>
            </SmallStack>
          </GroupBody>
          <GroupLabel>Clipboard</GroupLabel>
        </Group>

        <Group $w={171}>
          <GroupBody>
            <BigBtn $w={74}>
              <BigIcon><SelectIcon /></BigIcon>
              <BigLine>Select</BigLine>
              <BigLine><Caret /></BigLine>
            </BigBtn>
            <SmallStack>
              <SmallRow $muted><SmallIcon><CropIcon /></SmallIcon>Crop</SmallRow>
              <SmallRow><SmallIcon><ResizeIcon /></SmallIcon>Resize</SmallRow>
              <SmallRow><SmallIcon><RotateIcon /></SmallIcon>Rotate <Caret /></SmallRow>
            </SmallStack>
          </GroupBody>
          <GroupLabel>Image</GroupLabel>
        </Group>

        <Group $w={117}>
          <GroupBody>
            <ToolGrid>
              <ToolCell><PencilIcon /></ToolCell>
              <ToolCell><BucketIcon /></ToolCell>
              <ToolCell $on><TextToolGlyph>A</TextToolGlyph></ToolCell>
              <ToolCell><EraserIcon /></ToolCell>
              <ToolCell><PickerIcon /></ToolCell>
              <ToolCell><LensIcon /></ToolCell>
            </ToolGrid>
          </GroupBody>
          <GroupLabel>Tools</GroupLabel>
        </Group>

        <Group $w={77}>
          <GroupBody>
            <BigBtn $w={76}>
              <BigIcon><BrushIcon /></BigIcon>
              <BigLine>Brushes</BigLine>
              <BigLine><Caret /></BigLine>
            </BigBtn>
          </GroupBody>
          <GroupLabel />
        </Group>

        <Group $w={355}>
          <GroupBody>
            <Gallery>
              {SHAPES.map(d => <GalleryCell key={d}><ShapeIcon d={d} /></GalleryCell>)}
            </Gallery>
            <GalleryScroll>
              <ScrollStep><CaretUp $c="#bbb" /></ScrollStep>
              <ScrollStep><Caret $c="#555" /></ScrollStep>
              <ScrollStep><Bar /><Caret $c="#555" /></ScrollStep>
            </GalleryScroll>
            <SmallStack $ml={6}>
              <SmallRow $muted><OutlineIcon />Outline <Caret $c="#666" /></SmallRow>
              <SmallRow $muted><FillIcon />Fill <Caret $c="#666" /></SmallRow>
            </SmallStack>
          </GroupBody>
          <GroupLabel>Shapes</GroupLabel>
        </Group>

        <Group $w={76}>
          <GroupBody>
            <BigBtn $w={70} $muted>
              <BigIcon><SizeIcon /></BigIcon>
              <BigLine>Size</BigLine>
              <BigLine><Caret $c="#666" /></BigLine>
            </BigBtn>
          </GroupBody>
          <GroupLabel />
        </Group>

        <Group $w={531}>
          <GroupBody>
            <BigBtn $w={6} />
            <BigBtn $w={62} $on>
              <BigIcon $on><ColorWell $size={48} $c="#000" /></BigIcon>
              <BigLine>Color</BigLine>
              <BigLine>1</BigLine>
            </BigBtn>
            <BigBtn $w={60}>
              <BigIcon><ColorWell $size={36} $c="#fff" /></BigIcon>
              <BigLine>Color</BigLine>
              <BigLine>2</BigLine>
            </BigBtn>
            <Palette>
              {PALETTE.map((c, i) => <Swatch key={i} $c={c} />)}
            </Palette>
            <BigBtn $w={62}>
              <BigIcon><GradientWell /></BigIcon>
              <BigLine>Edit</BigLine>
              <BigLine>colors</BigLine>
            </BigBtn>
          </GroupBody>
          <GroupLabel>Colors</GroupLabel>
        </Group>

        <Group $w={82}>
          <GroupBody>
            <BigBtn $w={78}>
              <BigIcon><Paint3dTile><Paint3dIcon /></Paint3dTile></BigIcon>
              <BigLine>Edit with</BigLine>
              <BigLine>Paint 3D</BigLine>
            </BigBtn>
          </GroupBody>
          <GroupLabel />
        </Group>
      </Ribbon>

      <Workspace>
        <CanvasArea>
          <Bitmap>
            <Shot>
              <EdgeBar />
              <WordWindow>
                <WordTitle>
                  <WordSlot $w={32}><WSave /></WordSlot>
                  <WordSlot $w={24}><WUndo /></WordSlot>
                  <WordSlot $w={5}><TinyCaret /></WordSlot>
                  <WordSlot $w={26}><WRepeat /></WordSlot>
                  <WordSlot $w={22}><WTouch /></WordSlot>
                  <WordSlot $w={10}><TinyCaret /></WordSlot>
                  <WordSlot $w={30}><WCustomize /></WordSlot>
                  <WordName>devopsnotes - Word</WordName>
                  <SignIn>Sign in</SignIn>
                  <WordSlot $w={62}><WDisplay /></WordSlot>
                  <WordSlot $w={26}><WMin /></WordSlot>
                  <WordSlot $w={60}><WRestore /></WordSlot>
                  <WordSlot $w={21}><WClose /></WordSlot>
                </WordTitle>
                <WordTabs>
                  {WORD_TABS.map(([t, w]) => <WordTab key={t} $w={w}>{t}</WordTab>)}
                  <TellMe><WBulb />Tell me what you want to do</TellMe>
                  <ShareBox><WPerson />Share</ShareBox>
                </WordTabs>
                <DocBody>
                  <Page>
                    <DocLine $gap={-15} $bold>What are Hosted Servers?</DocLine>
                    <DocLine $indent={75}>Hosted Servers are nothing but physical machines where</DocLine>
                    <DocLine>application/Web/Databases servers are hosted</DocLine>
                    <DocLine $gap={10}>199.323.434.53:8080</DocLine>
                    <DocLine $gap={24}>- Application server can start at any port in Hosted Server. And can be accessed</DocLine>
                    <DocLine>through</DocLine>
                    <DocLine>HostedServerIpAddress: portNumber</DocLine>
                    <DocLine $gap={34}>We can map HostedServerIpAddress: portNumber to any custom Domain Name</DocLine>
                    <DocLine>so that we can access the application server directly with Domain Name</DocLine>
                    <DocLine $gap={10}><Squiggle>Dist</Squiggle>- ng -build</DocLine>
                    <DocLine $gap={11}><Squiggle>Mvn</Squiggle> clean install</DocLine>
                    <DocLine $gap={43}>To <Selected>keep our Developed App running on server</Selected> and access it from anywhere, we</DocLine>
                    <DocLine>should first build the code so that build files will be generated. These build files</DocLine>
                    <DocLine>should be placed into App/Web Server</DocLine>
                    <DocLine>And then we can access the developed App directly on the browser with</DocLine>
                    <DocLine><GrammarMark>HostedServerIpAddress :portNumber</GrammarMark> or with Domain Name if mapped.</DocLine>
                  </Page>
                </DocBody>
              </WordWindow>

              <Annotation $left={533} $top={325}>Angular project build command which provides build file(Artifacts)</Annotation>
              <Annotation $left={525} $top={363}>Java project build command which provides the build file.</Annotation>

              <MiniBar>
                <MiniRow>
                  <MiniField $w={77}>Calibri (Bo <MiniChevron /></MiniField>
                  <MiniField $w={50}>14 <MiniChevron /></MiniField>
                  <MiniCell $w={20} $size={15}>A</MiniCell>
                  <MiniCell $w={21} $size={11}>A</MiniCell>
                  <MiniCell $w={20}><MiniEraser /></MiniCell>
                </MiniRow>
                <MiniRow>
                  <MiniCell $w={16} $b>B</MiniCell>
                  <MiniCell $w={28} $i $b>I</MiniCell>
                  <MiniCell $w={14} $u $b>U</MiniCell>
                  <MiniCell $w={27}><MarkedLetter $bar="#ffe000" $size={10}>ab</MarkedLetter></MiniCell>
                  <MiniCell $w={6}><TinyCaret /></MiniCell>
                  <MiniCell $w={26}><MarkedLetter $bar="#c00000" $size={13}>A</MarkedLetter></MiniCell>
                  <MiniCell $w={5}><TinyCaret /></MiniCell>
                  <MiniCell $w={26}><BulletsIcon /></MiniCell>
                  <MiniCell $w={6}><TinyCaret /></MiniCell>
                  <MiniCell $w={26}><NumberingIcon /></MiniCell>
                  <MiniCell $w={6}><TinyCaret /></MiniCell>
                </MiniRow>
                <StylesBox>
                  <StylesGlyph>A</StylesGlyph>
                  Styles
                </StylesBox>
              </MiniBar>
              <BeamCursor><IBeam /></BeamCursor>
            </Shot>
            <Handle />
          </Bitmap>
        </CanvasArea>
        <Scrollbar>
          <ScrollEnd $h={27}><ArrowTiny up /></ScrollEnd>
          <ScrollThumb />
          <ScrollEnd $h={43}><ArrowTiny /></ScrollEnd>
        </Scrollbar>
      </Workspace>

      <StatusBar>
        <StatusCell $w={244}><MoveIcon />1246, 528px</StatusCell>
        <StatusCell $w={245}><SelSizeIcon /></StatusCell>
        <StatusCell $w={245}><SelSizeIcon solid />1592 × 782px</StatusCell>
        <StatusCell $w={246} />
        <StatusCell $w={647} />
        <ZoomBox>
          <ZoomPct>100%</ZoomPct>
          <ZoomButton>−</ZoomButton>
          <ZoomTrack><ZoomThumb /></ZoomTrack>
          <ZoomButton>+</ZoomButton>
        </ZoomBox>
      </StatusBar>

      <Taskbar>
        <TaskSlot $w={72}><TaskGlyph><StartIcon /></TaskGlyph><TaskLine /></TaskSlot>
        <TaskSlot $w={71}><TaskGlyph><SearchGlyph><FiSearch /></SearchGlyph></TaskGlyph><TaskLine /></TaskSlot>
        <TaskSlot $w={77}><TaskGlyph><TaskViewIcon /></TaskGlyph><TaskLine /></TaskSlot>
        {TASK_APPS.map((a, i) => (
          <TaskSlot key={i} $w={62.8} $active={a.active}>
            <TaskGlyph>{a.icon}</TaskGlyph>
            <TaskLine $on={a.on} />
          </TaskSlot>
        ))}
        <TraySlot $w={36} />
        <TraySlot $w={40}><WeatherIcon /></TraySlot>
        <TraySlot $w={82} $start>28°C</TraySlot>
        <TraySlot $w={36}><TrayChevron /></TraySlot>
        <TraySlot $w={36}><MeetIcon /></TraySlot>
        <TraySlot $w={36}><CloudIcon /></TraySlot>
        <TraySlot $w={36}><MicIcon /></TraySlot>
        <TraySlot $w={36}><SyncIcon /></TraySlot>
        <TraySlot $w={36}><BatteryIcon /></TraySlot>
        <TraySlot $w={36}><WifiIcon /></TraySlot>
        <TraySlot $w={36}><SoundIcon /></TraySlot>
        <TraySlot $w={54}>ENG</TraySlot>
        <Clock>
          <ClockLine>22:13</ClockLine>
          <ClockLine>06-08-2023</ClockLine>
        </Clock>
        <NotifyBox>
          <NotifyIcon />
          <NotifyBadge>1</NotifyBadge>
        </NotifyBox>
        <TaskEnd />
      </Taskbar>
    </Root>
  )
}

export default App
